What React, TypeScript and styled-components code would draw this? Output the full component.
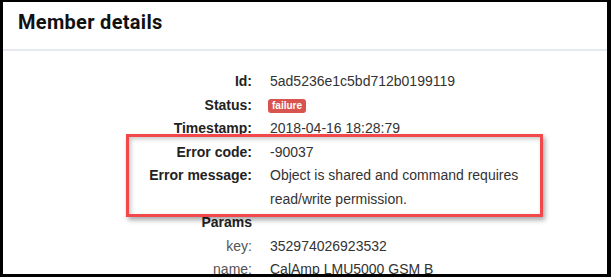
import React from "react";
import styled, { createGlobalStyle } from "styled-components";

const Global = createGlobalStyle`
  html, body { margin: 0; padding: 0; background: #000; }
  body { padding: 2px 4px 3px 3px; }
  * { box-sizing: border-box; }
`;

const Panel = styled.div`
  position: relative;
  background: #fff;
  height: 272px;
  overflow: hidden;
  font-family: "Liberation Sans", Arial, sans-serif;
  color: #333;
`;

const Header = styled.div`
  height: 49px;
  padding: 8px 0 0 15px;
  border-bottom: 2px solid #e6e9ed;
`;

const Title = styled.h1`
  margin: 0;
  font-family: Roboto, "Liberation Sans", sans-serif;
  font-weight: 700;
  font-size: 20px;
  letter-spacing: 0.3px;
  line-height: 24px;
  color: #111;
`;

const Body = styled.div`
  padding-top: 19px;
  display: grid;
  grid-template-columns: 249px 1fr;
  column-gap: 18px;
  font-size: 14px;
  line-height: 23.5px;
`;

const Label = styled.div<{ $plain?: boolean }>`
  text-align: right;
  font-weight: ${(p) => (p.$plain ? 400 : 700)};
  color: ${(p) => (p.$plain ? "#555" : "#222")};
`;

const Value = styled.div`
  color: #333;
  max-width: 262px;
`;

const Badge = styled.span`
  display: inline-block;
  background: #d9534f;
  color: #fff;
  font-weight: 700;
  font-size: 10px;
  line-height: 14px;
  padding: 0 4px;
  border-radius: 3px;
  vertical-align: 1px;
  margin-left: -2px;
`;

const Highlight = styled.div`
  position: absolute;
  left: 123px;
  top: 132px;
  width: 417px;
  height: 83px;
  border: 3px solid #f2474b;
  box-shadow: 2px 3px 5px rgba(0, 0, 0, 0.35), inset 2px 2px 4px rgba(0, 0, 0, 0.22);
  pointer-events: none;
`;

const rows: { label: string; value?: React.ReactNode; plain?: boolean }[] = [
  { label: "Id:", value: "5ad5236e1c5bd712b0199119" },
  { label: "Status:", value: <Badge>failure</Badge> },
  { label: "Timestamp:", value: "2018-04-16 18:28:79" },
  { label: "Error code:", value: "-90037" },
  { label: "Error message:", value: "Object is shared and command requires read/write permission." },
  { label: "Params", value: "" },
  { label: "key:", value: "352974026923532", plain: true },
  { label: "name:", value: "CalAmp LMU5000 GSM B", plain: true },
];

export default function App() {
  return (
    <>
      <Global />
      <Panel>
        <Header>
          <Title>Member details</Title>
        </Header>
        <Body>
          {rows.map((r) => (
            <React.Fragment key={r.label}>
              <Label $plain={r.plain}>{r.label}</Label>
              <Value>{r.value}</Value>
            </React.Fragment>
          ))}
        </Body>
        <Highlight />
      </Panel>
    </>
  );
}
